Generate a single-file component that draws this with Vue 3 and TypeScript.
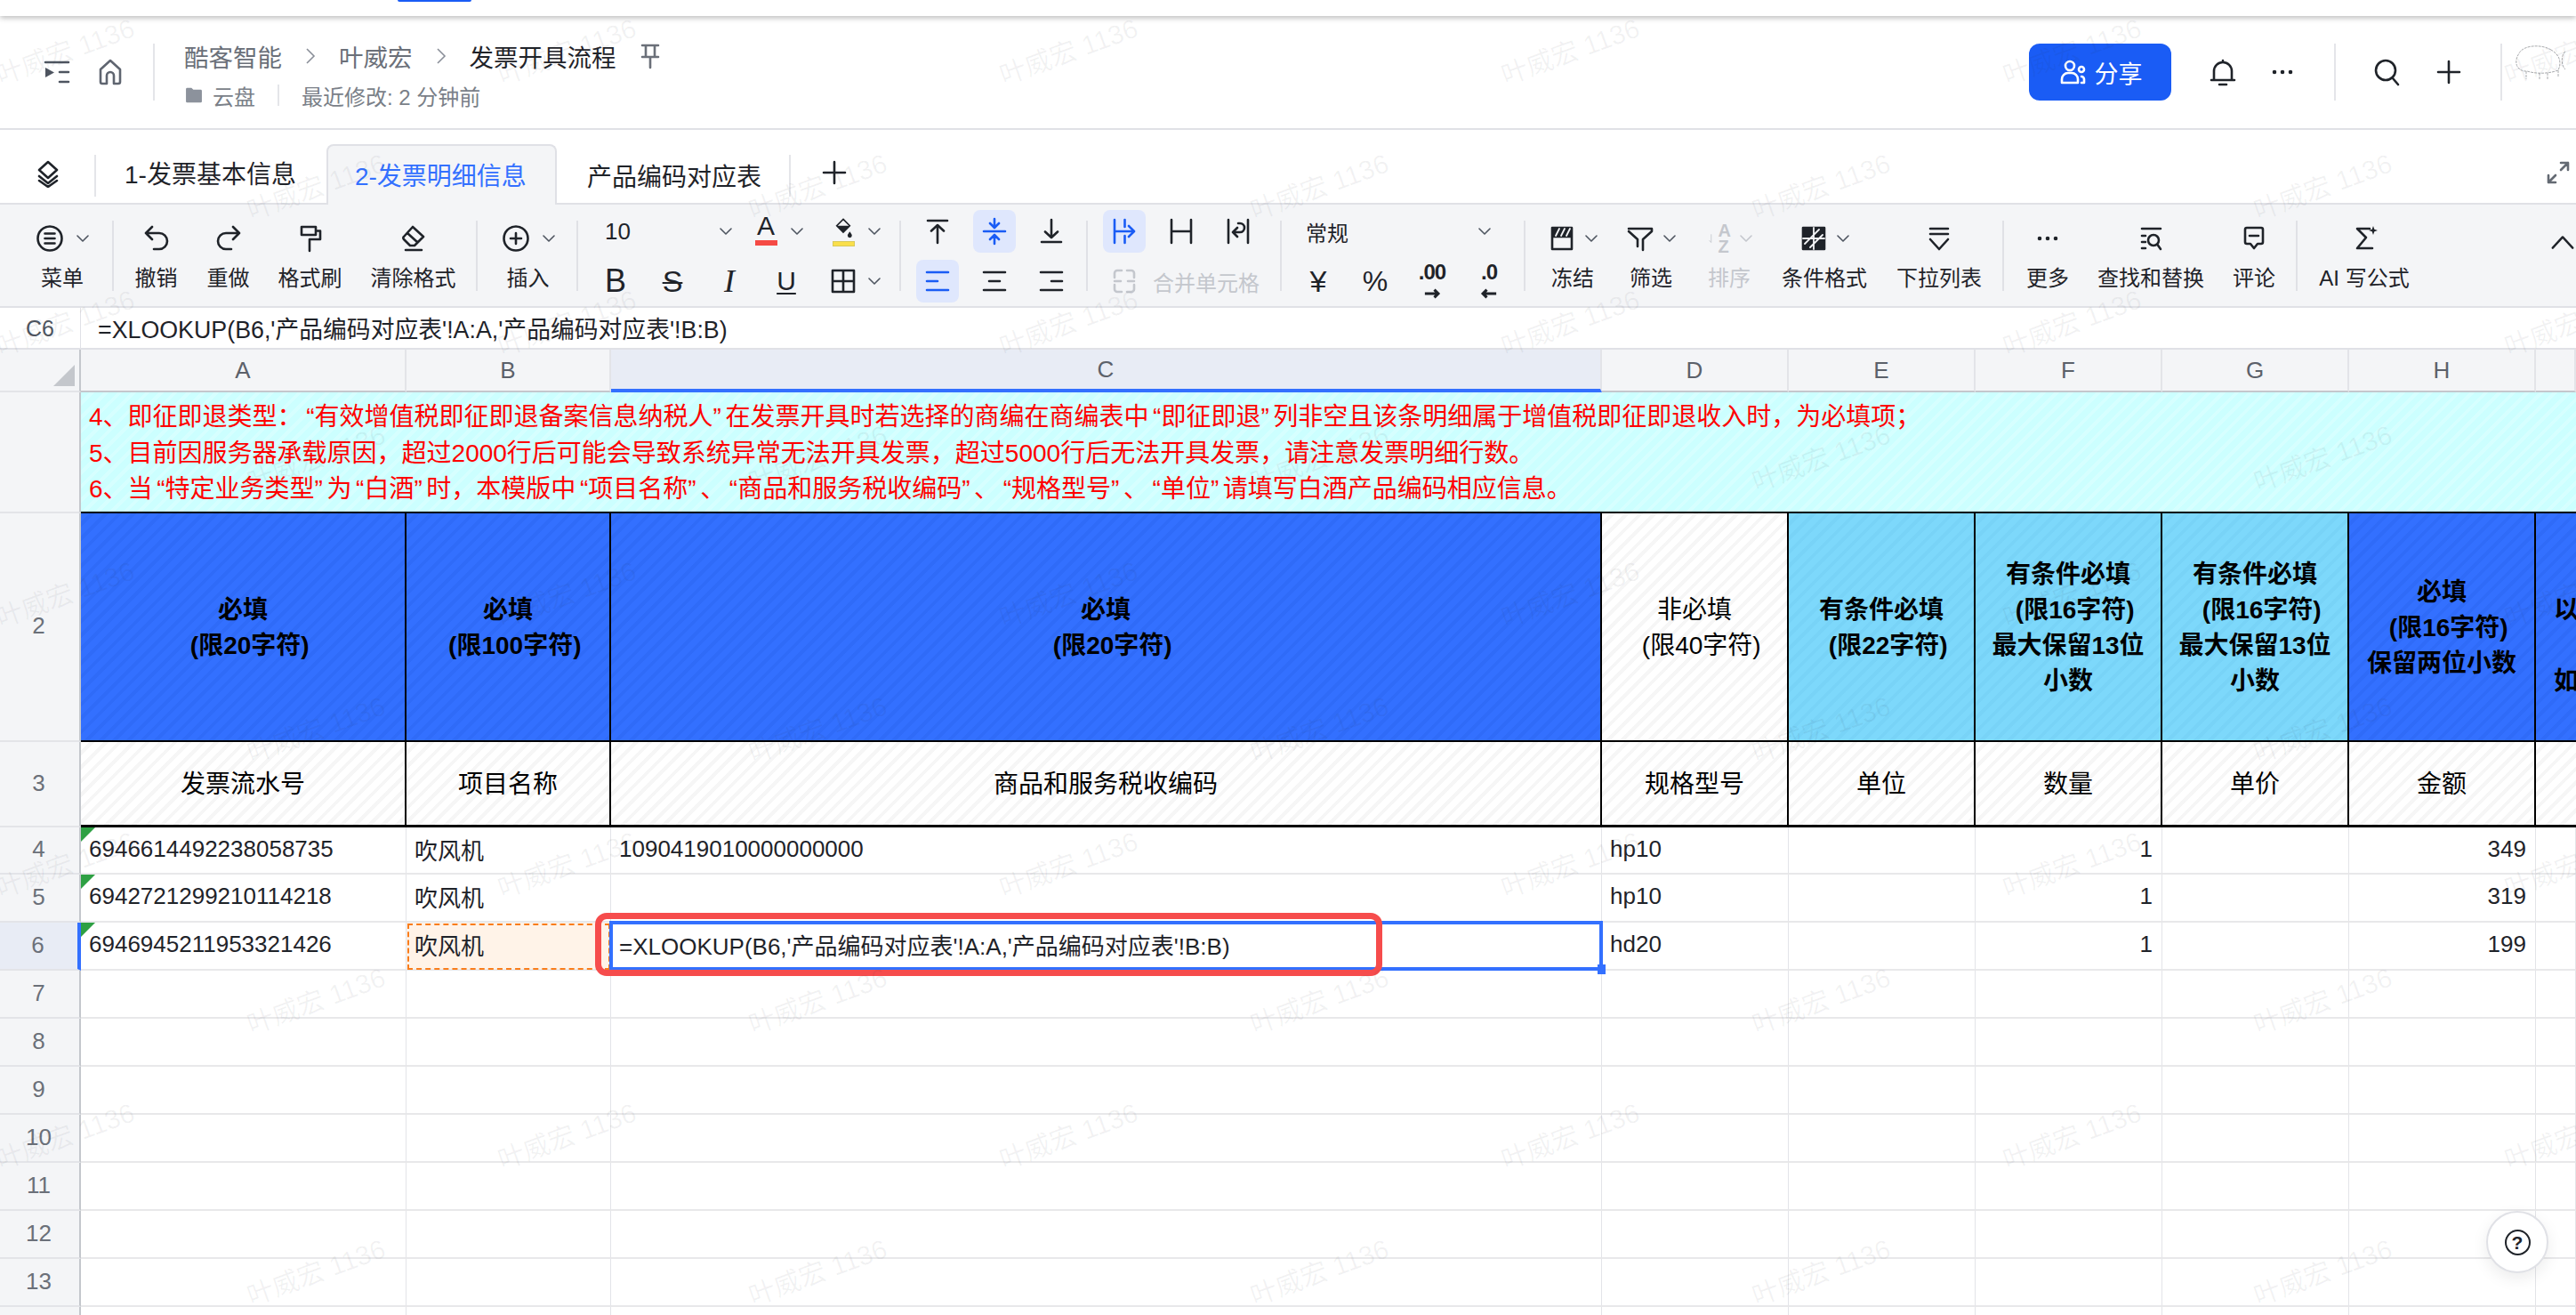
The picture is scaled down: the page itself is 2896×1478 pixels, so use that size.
<script setup lang="ts">
import { computed } from "vue";

interface Tool {
  label: string;
  icon?: string;
  width: number;
  chev?: boolean;
  muted?: boolean;
}

interface HeadCell {
  lines: string[];
  tone: "blue" | "sky" | "plain" | "edge";
}

// 32x32 线条图标
const strokes: Record<string, string> = {
  sidebar: "M3 5H29 M19 16H29 M19 27H29",
  home: "M16 3L27 13V27a2 2 0 0 1-2 2H20V20a4 4 0 0 0-8 0V29H7a2 2 0 0 1-2-2V13Z",
  pin: "M7 4H25 M11 4V16 M21 4V16 M7 17H25 M16 17V29",
  layers: "M16 3L26 12L16 21L6 12Z M6 19L16 27L26 19 M6 24L16 31L26 24",
  plus: "M16 4V28 M4 16H28",
  expand: "M19 5H27V13 M27 5L19 13 M13 27H5V19 M5 27L13 19",
  bell: "M16 3V5 M6 25V15a10 10 0 0 1 20 0V25 M3 25H29 M12 30H20",
  search: "M14 3a11 11 0 1 0 0 22a11 11 0 1 0 0-22z M22 23L28 30",
  people: "M13 4a5 5 0 1 0 0 10a5 5 0 1 0 0-10z M4 28V24a7 7 0 0 1 7-7h4a7 7 0 0 1 7 7v4Z M26 10a3 3 0 1 0 0 6a3 3 0 1 0 0-6z M26 21a3 3 0 0 1 3 3v4H26",
  menu: "M16 2.500a13.500 13.500 0 1 0 0 27a13.500 13.500 0 1 0 0-27z M10.500 10.500H21.500 M10.500 16H21.500 M10.500 21.500H21.500",
  undo: "M11 3L4 10L11 17 M4 10H19a9 9 0 0 1 0 18H13",
  redo: "M21 3L28 10L21 17 M28 10H13a9 9 0 0 0 0 18H19",
  brush: "M6 3H22V12H6Z M22 7.500H27V17H15V30",
  eraser: "M15 3L27 14L17 24H12L5 17a2 2 0 0 1 0-3Z M9 10L20 20 M7 29H25",
  insert: "M16 2.500a13.500 13.500 0 1 0 0 27a13.500 13.500 0 1 0 0-27z M16 10V22 M10 16H22",
  border: "M4 4H28V28H4Z M16 4V28 M4 16H28",
  top: "M5 4H27 M16 29V10 M9 15.500L16 9L23 15.500",
  mid: "M4 16H28 M16 2V11 M11 7L16 12L21 7 M16 30V21 M11 25L16 20L21 25",
  bottom: "M5 28H27 M16 3V22 M9 16.500L16 23L23 16.500",
  left: "M4 6H28 M4 16H16 M4 26H28",
  center: "M4 6H28 M10 16H22 M4 26H28",
  right: "M4 6H28 M16 16H28 M4 26H28",
  overflow: "M5 3V29 M16.500 3V11 M16.500 21V29 M5 16H24 M21 10L27 16L21 22",
  clip: "M5 3V29 M27 3V29 M5 16H27",
  wrap: "M5 3V29 M27 3V29 M16 7H18a5 5 0 0 1 0 10H10 M15 12L10 17L15 22",
  merge: "M13 4H8a3 3 0 0 0-3 3v5 M19 4H24a3 3 0 0 1 3 3v5 M13 28H8a3 3 0 0 1-3-3v-5 M19 28H24a3 3 0 0 0 3-3v-5 M5 16H12 M27 16H20",
  freeze: "M5 4H27V28H5Z M5 14H27",
  filter: "M3 5H29V8L19 17V29 M3 8L13 17V25",
  cond: "M4 4H28V28H4Z",
  dropdown: "M6 5H26 M6 11H26 M6 17L16 28L26 17",
  dots: "M7 16h.01 M16 16h.01 M25 16h.01",
  find: "M6 5H27 M6 13H10 M6 20H10 M6 27H10 M19 12a6 6 0 1 0 0 12a6 6 0 1 0 0-12z M23.500 23L27 28",
  comment: "M8 4H24a2 2 0 0 1 2 2V20a2 2 0 0 1-2 2H20L16 27L12 22H8a2 2 0 0 1-2-2V6a2 2 0 0 1 2-2Z M11 13H21",
  sigma: "M22 5H8L18 15L8 27H25",
  caretUp: "M4 22L16 9L28 22",
  bucket: "M16 3L25 12L16 21L7 12Z",
  arrowRight: "M3 16H27 M20 9L27 16L20 23",
  arrowLeft: "M29 16H5 M12 9L5 16L12 23",
  sortArrow: "M16 3V28 M10 22L16 29",
};

const solids: Record<string, string> = {
  sidebar: "M3 11L13 16.500L3 22Z",
  folder: "M3 6a2 2 0 0 1 2-2h7l3 3h12a2 2 0 0 1 2 2v17a2 2 0 0 1-2 2H5a2 2 0 0 1-2-2z",
  freeze: "M5 4H27V14H5Z",
  cond: "M4 4H28V28H4Z",
  bucket: "M7 12H25L16 21Z M25 20c2 3 3 4 3 5.500a3 3 0 0 1-6 0c0-1.500 1-2.500 3-5.500Z",
  sigma: "M26 2l1.300 3.700L31 7l-3.700 1.300L26 12l-1.300-3.700L21 7l3.700-1.300Z",
};

const slits: Record<string, string> = {
  freeze: "M9 13L13 5 M15 13L19 5 M21 13L25 5",
  cond: "M16 4V28 M4 16H28 M6 22L22 6 M12 26L26 12",
};

const editTools: Tool[] = [
  { label: "撤销", icon: "undo", width: 81 },
  { label: "重做", icon: "redo", width: 81 },
  { label: "格式刷", icon: "brush", width: 103 },
  { label: "清除格式", icon: "eraser", width: 129 },
];

const dataTools: Tool[] = [
  { label: "冻结", icon: "freeze", width: 88, chev: true },
  { label: "筛选", icon: "filter", width: 88, chev: true },
  { label: "排序", width: 88, chev: true, muted: true },
  { label: "条件格式", icon: "cond", width: 126, chev: true },
  { label: "下拉列表", icon: "dropdown", width: 132 },
];

const moreTools: Tool[] = [
  { label: "更多", icon: "dots", width: 80 },
  { label: "查找和替换", icon: "find", width: 152 },
  { label: "评论", icon: "comment", width: 80 },
];

const columnLetters = ["A", "B", "C", "D", "E", "F", "G", "H", ""];

const noteLines = [
  "4、即征即退类型：“有效增值税即征即退备案信息纳税人”在发票开具时若选择的商编在商编表中“即征即退”列非空且该条明细属于增值税即征即退收入时，为必填项；",
  "5、目前因服务器承载原因，超过2000行后可能会导致系统异常无法开具发票，超过5000行后无法开具发票，请注意发票明细行数。",
  "6、当“特定业务类型”为“白酒”时，本模版中“项目名称”、“商品和服务税收编码”、“规格型号”、“单位”请填写白酒产品编码相应信息。",
];

// 引号在参考图里比 Liberation 的字形更宽，单独包一层补宽度
const noteParts = noteLines.map((line) => line.split(/([“”])/).filter((part) => part !== ""));

const headCells: HeadCell[] = [
  { lines: ["必填", "  (限20字符)"], tone: "blue" },
  { lines: ["必填", "  (限100字符)"], tone: "blue" },
  { lines: ["必填", "  (限20字符)"], tone: "blue" },
  { lines: ["非必填", "  (限40字符)"], tone: "plain" },
  { lines: ["有条件必填", "  (限22字符)"], tone: "sky" },
  { lines: ["有条件必填", "  (限16字符)", "最大保留13位", "小数"], tone: "sky" },
  { lines: ["有条件必填", "  (限16字符)", "最大保留13位", "小数"], tone: "sky" },
  { lines: ["必填", "  (限16字符)", "保留两位小数"], tone: "blue" },
  { lines: ["", "以", "", "如"], tone: "edge" },
];

const titleCells = ["发票流水号", "项目名称", "商品和服务税收编码", "规格型号", "单位", "数量", "单价", "金额", ""];

const dataRows = [
  { no: 4, cells: ["6946614492238058735", "吹风机", "1090419010000000000", "hp10", "", "1", "", "349", ""] },
  { no: 5, cells: ["6942721299210114218", "吹风机", "", "hp10", "", "1", "", "319", ""] },
  { no: 6, cells: ["6946945211953321426", "吹风机", "=XLOOKUP(B6,'产品编码对应表'!A:A,'产品编码对应表'!B:B)", "hd20", "", "1", "", "199", ""] },
  ...[7, 8, 9, 10, 11, 12, 13, 14].map((no) => ({ no, cells: ["", "", "", "", "", "", "", "", ""] })),
];

const rightAligned = [5, 7];

const watermarks = computed(() => {
  const marks: { left: number; top: number }[] = [];
  for (let row = 0; row < 10; row++) {
    const shift = row % 2 === 1 ? 282 : 0;
    for (let col = 0; col < 6; col++) {
      marks.push({ left: shift + col * 564 - 8, top: 38 + Math.round(row * 152.4) });
    }
  }
  return marks;
});
</script>

<template>
  <div class="page">
    <div class="strip"><span class="strip-pill" /></div>

    <header class="header">
      <svg class="ico nav-first" viewBox="0 0 32 32"><path :d="strokes.sidebar" /><path class="solid" :d="solids.sidebar" /></svg>
      <svg class="ico nav-home" viewBox="0 0 32 32"><path :d="strokes.home" /></svg>
      <span class="vline nav-line" />
      <div class="doc">
        <div class="crumbs">
          <span class="crumb">酷客智能</span>
          <svg class="crumb-chev" viewBox="0 0 14 24"><path d="M3 4L11 12L3 20" /></svg>
          <span class="crumb">叶威宏</span>
          <svg class="crumb-chev" viewBox="0 0 14 24"><path d="M3 4L11 12L3 20" /></svg>
          <span class="crumb crumb-now">发票开具流程</span>
          <svg class="ico pin" viewBox="0 0 32 32"><path :d="strokes.pin" /></svg>
        </div>
        <div class="meta">
          <svg class="folder" viewBox="0 0 32 32"><path :d="solids.folder" /></svg>
          <span>云盘</span>
          <span class="meta-line" />
          <span>最近修改: 2 分钟前</span>
        </div>
      </div>

      <div class="actions">
        <button type="button" class="share">
          <svg class="ico share-ico" viewBox="0 0 32 32"><path :d="strokes.people" /></svg>
          分享
        </button>
        <svg class="ico act-bell" viewBox="0 0 32 32"><path :d="strokes.bell" /></svg>
        <svg class="ico act-dots" viewBox="0 0 32 32"><path class="dot" :d="strokes.dots" /></svg>
        <span class="vline act-line" />
        <svg class="ico act-search" viewBox="0 0 32 32"><path :d="strokes.search" /></svg>
        <svg class="ico act-plus" viewBox="0 0 32 32"><path :d="strokes.plus" /></svg>
        <span class="vline act-line" />
        <svg class="avatar" viewBox="0 0 80 70">
          <path d="M52 10C40 3 20 5 16 14C9 24 14 35 25 34C38 38 52 36 60 33C64 24 62 16 52 10Z" />
          <path d="M24 34V43 M39 36V44 M48 36V44 M60 33V41 M68 12C63 15 63 28 68 32" />
        </svg>
      </div>
    </header>

    <nav class="tabs">
      <span class="tab-layers">
        <svg class="ico" viewBox="0 0 32 32"><path :d="strokes.layers" /></svg>
      </span>
      <span class="tab">1-发票基本信息</span>
      <span class="tab tab-active">2-发票明细信息</span>
      <span class="tab tab-last">产品编码对应表</span>
      <svg class="ico tab-plus" viewBox="0 0 32 32"><path :d="strokes.plus" /></svg>
      <svg class="ico tab-expand" viewBox="0 0 32 32"><path :d="strokes.expand" /></svg>
    </nav>

    <section class="toolbar">
      <div class="group" style="width: 128px">
        <div class="tool tool-menu">
          <div class="tool-icon">
            <svg class="ico" viewBox="0 0 32 32"><path :d="strokes.menu" /></svg>
            <svg class="chev" viewBox="0 0 14 10"><path d="M1 2L7 8L13 2" /></svg>
          </div>
          <span class="tool-label">菜单</span>
        </div>
      </div>

      <div class="group group-edit">
        <div v-for="tool in editTools" :key="tool.label" class="tool" :style="{ width: `${tool.width}px` }">
          <div class="tool-icon">
            <svg class="ico" viewBox="0 0 32 32"><path :d="strokes[tool.icon!]" /></svg>
          </div>
          <span class="tool-label">{{ tool.label }}</span>
        </div>
      </div>

      <div class="group" style="width: 113px">
        <div class="tool" style="width: 113px">
          <div class="tool-icon">
            <svg class="ico" viewBox="0 0 32 32"><path :d="strokes.insert" /></svg>
            <svg class="chev" viewBox="0 0 14 10"><path d="M1 2L7 8L13 2" /></svg>
          </div>
          <span class="tool-label">插入</span>
        </div>
      </div>

      <div class="group group-stack" style="width: 363px">
        <div class="stack-row font-top">
          <span class="font-size">10<svg class="chev" viewBox="0 0 14 10"><path d="M1 2L7 8L13 2" /></svg></span>
          <span class="swatch swatch-a"><span class="glyph glyph-a">A</span><i class="bar bar-red" /></span>
          <svg class="chev" viewBox="0 0 14 10"><path d="M1 2L7 8L13 2" /></svg>
          <span class="swatch swatch-fill">
            <svg class="bucket" viewBox="0 0 32 32"><path :d="strokes.bucket" /><path class="solid" :d="solids.bucket" /></svg>
            <i class="bar bar-yellow" />
          </span>
          <svg class="chev" viewBox="0 0 14 10"><path d="M1 2L7 8L13 2" /></svg>
        </div>
        <div class="stack-row font-bottom">
          <span class="fmt glyph-b">B</span>
          <span class="fmt glyph-s">S</span>
          <span class="fmt glyph-i">I</span>
          <span class="fmt glyph-u">U</span>
          <span class="fmt fmt-border"><svg class="ico" viewBox="0 0 32 32"><path :d="strokes.border" /></svg></span>
          <svg class="chev" viewBox="0 0 14 10"><path d="M1 2L7 8L13 2" /></svg>
        </div>
      </div>

      <div class="group group-stack group-cells" style="width: 210px">
        <div class="stack-row">
          <span class="cellbtn"><svg class="ico" viewBox="0 0 32 32"><path :d="strokes.top" /></svg></span>
          <span class="cellbtn cellbtn-on"><svg class="ico" viewBox="0 0 32 32"><path :d="strokes.mid" /></svg></span>
          <span class="cellbtn"><svg class="ico" viewBox="0 0 32 32"><path :d="strokes.bottom" /></svg></span>
        </div>
        <div class="stack-row">
          <span class="cellbtn cellbtn-on"><svg class="ico" viewBox="0 0 32 32"><path :d="strokes.left" /></svg></span>
          <span class="cellbtn"><svg class="ico" viewBox="0 0 32 32"><path :d="strokes.center" /></svg></span>
          <span class="cellbtn"><svg class="ico" viewBox="0 0 32 32"><path :d="strokes.right" /></svg></span>
        </div>
      </div>

      <div class="group group-stack group-cells" style="width: 218px">
        <div class="stack-row">
          <span class="cellbtn cellbtn-on"><svg class="ico" viewBox="0 0 32 32"><path :d="strokes.overflow" /></svg></span>
          <span class="cellbtn"><svg class="ico" viewBox="0 0 32 32"><path :d="strokes.clip" /></svg></span>
          <span class="cellbtn"><svg class="ico" viewBox="0 0 32 32"><path :d="strokes.wrap" /></svg></span>
        </div>
        <div class="stack-row is-muted">
          <span class="cellbtn"><svg class="ico" viewBox="0 0 32 32"><path :d="strokes.merge" /></svg></span>
          <span class="merge-label">合并单元格</span>
        </div>
      </div>

      <div class="group group-stack group-cells" style="width: 274px">
        <div class="stack-row number-top">
          <span class="number-name">常规</span>
          <svg class="chev" viewBox="0 0 14 10"><path d="M1 2L7 8L13 2" /></svg>
        </div>
        <div class="stack-row">
          <span class="cellbtn num-glyph num-yen">¥</span>
          <span class="cellbtn num-glyph num-pct">%</span>
          <span class="cellbtn dec">
            <span class="dec-text">.00</span>
            <svg class="dec-arrow" viewBox="0 0 32 32"><path :d="strokes.arrowRight" /></svg>
          </span>
          <span class="cellbtn dec">
            <span class="dec-text">.0</span>
            <svg class="dec-arrow" viewBox="0 0 32 32"><path :d="strokes.arrowLeft" /></svg>
          </span>
        </div>
      </div>

      <div class="group group-tools" style="width: 538px">
        <div
          v-for="tool in dataTools"
          :key="tool.label"
          class="tool"
          :class="{ 'is-muted': tool.muted }"
          :style="{ width: `${tool.width}px` }"
        >
          <div class="tool-icon tool-icon-wide">
            <svg v-if="tool.icon" class="ico" viewBox="0 0 32 32">
              <path v-if="solids[tool.icon]" class="solid" :d="solids[tool.icon]" />
              <path :d="strokes[tool.icon]" />
              <path v-if="slits[tool.icon]" class="slit" :d="slits[tool.icon]" />
            </svg>
            <span v-else class="sort">
              <svg class="sort-arrow" viewBox="0 0 32 32"><path :d="strokes.sortArrow" /></svg>
              <span class="sort-az">A<br />Z</span>
            </span>
            <svg v-if="tool.chev" class="chev" viewBox="0 0 14 10"><path d="M1 2L7 8L13 2" /></svg>
          </div>
          <span class="tool-label">{{ tool.label }}</span>
        </div>
      </div>

      <div class="group group-tools" style="width: 330px">
        <div v-for="tool in moreTools" :key="tool.label" class="tool" :style="{ width: `${tool.width}px` }">
          <div class="tool-icon">
            <svg class="ico" viewBox="0 0 32 32"><path :class="{ dot: tool.icon === 'dots' }" :d="strokes[tool.icon!]" /></svg>
          </div>
          <span class="tool-label">{{ tool.label }}</span>
        </div>
      </div>

      <div class="group group-last">
        <div class="tool" style="width: 150px">
          <div class="tool-icon">
            <svg class="ico" viewBox="0 0 32 32"><path :d="strokes.sigma" /><path class="solid" :d="solids.sigma" /></svg>
          </div>
          <span class="tool-label">AI 写公式</span>
        </div>
      </div>

      <svg class="ico collapse" viewBox="0 0 32 32"><path :d="strokes.caretUp" /></svg>
    </section>

    <section class="formula">
      <span class="formula-ref">C6</span>
      <span class="formula-text">=XLOOKUP(B6,'产品编码对应表'!A:A,'产品编码对应表'!B:B)</span>
    </section>

    <main class="sheet">
      <div class="row row-columns">
        <div class="rowno corner"><i class="corner-mark" /></div>
        <div
          v-for="(letter, index) in columnLetters"
          :key="index"
          class="colhead"
          :class="{ 'colhead-on': letter === 'C' }"
        >
          {{ letter }}
        </div>
      </div>

      <div class="row row-note">
        <div class="rowno" />
        <div class="note">
          <p v-for="(parts, lineIndex) in noteParts" :key="lineIndex">
            <span
              v-for="(part, partIndex) in parts"
              :key="partIndex"
              :class="{ 'quote-open': part === '“', 'quote-close': part === '”' }"
            >{{ part }}</span>
          </p>
        </div>
      </div>

      <div class="row row-head">
        <div class="rowno">2</div>
        <div
          v-for="(cell, index) in headCells"
          :key="index"
          class="head"
          :class="`head-${cell.tone}`"
        >
          <div v-for="(line, lineIndex) in cell.lines" :key="lineIndex" class="head-line">{{ line }}</div>
        </div>
      </div>

      <div class="row row-title">
        <div class="rowno">3</div>
        <div v-for="(title, index) in titleCells" :key="index" class="title">{{ title }}</div>
      </div>

      <div
        v-for="row in dataRows"
        :key="row.no"
        class="row row-data"
        :class="{ 'row-first': row.no === 4 }"
      >
        <div class="rowno" :class="{ 'rowno-on': row.no === 6 }">{{ row.no }}</div>
        <div
          v-for="(value, index) in row.cells"
          :key="index"
          class="cell"
          :class="{
            'cell-right': rightAligned.includes(index),
            'cell-flag': index === 0 && row.no <= 6,
            'cell-copy': index === 1 && row.no === 6,
            'cell-active': index === 2 && row.no === 6,
          }"
        >
          {{ value }}
        </div>
      </div>
    </main>

    <div class="callout" />

    <button type="button" class="help"><span class="help-ring">?</span></button>

    <div class="watermarks" aria-hidden="true">
      <span
        v-for="(mark, index) in watermarks"
        :key="index"
        class="watermark"
        :style="{ left: `${mark.left}px`, top: `${mark.top}px` }"
      >叶威宏 1136</span>
    </div>
  </div>
</template>

<style>
body {
  margin: 0;
  background: #fff;
  font-family: "Liberation Sans", "Noto Sans CJK SC", sans-serif;
}
</style>

<style scoped>
.page {
  position: relative;
  width: 2896px;
  height: 1478px;
  overflow: hidden;
  color: #1f2329;
  background: #fff;
  font-family: "Liberation Sans", "Noto Sans CJK SC", sans-serif;
}

.ico {
  width: 32px;
  height: 32px;
  flex: none;
  fill: none;
  stroke: currentColor;
  stroke-width: 2.6;
  stroke-linecap: round;
  stroke-linejoin: round;
}

.ico .solid,
.bucket .solid {
  fill: currentColor;
  stroke: none;
}

.ico .slit {
  stroke: #f4f5f7;
  stroke-width: 1.8;
}

.ico .dot {
  stroke-width: 4.600;
}

.chev {
  width: 14px;
  height: 10px;
  flex: none;
  fill: none;
  stroke: #4e5560;
  stroke-width: 1.6;
  stroke-linecap: round;
  stroke-linejoin: round;
}

.strip {
  position: relative;
  height: 18px;
  background: #fff;
  box-shadow: 0 2px 6px rgba(0, 0, 0, 0.28);
}

.strip-pill {
  position: absolute;
  left: 447px;
  top: 0;
  width: 83px;
  height: 2px;
  border-radius: 0 0 8px 8px;
  background: #1a5cf5;
}

.header {
  display: flex;
  align-items: center;
  height: 128px;
  box-sizing: border-box;
  border-bottom: 2px solid #e0e1e6;
  padding-left: 48px;
}

.nav-first {
  color: #4e5560;
}

.nav-home {
  margin-left: 28px;
  color: #5f6570;
}

.vline {
  flex: none;
  width: 2px;
  height: 64px;
  background: #e4e5e9;
}

.nav-line {
  margin-left: 32px;
}

.doc {
  margin-left: 33px;
  padding-top: 5px;
}

.crumbs {
  display: flex;
  align-items: center;
  gap: 25px;
  height: 40px;
  font-size: 27.5px;
  color: #6b7079;
}

.crumb-now {
  color: #1f2329;
}

.crumb-chev {
  width: 14px;
  height: 24px;
  fill: none;
  stroke: #8a8f99;
  stroke-width: 1.6;
}

.pin {
  color: #6b7079;
  margin-left: -3px;
}

.meta {
  display: flex;
  align-items: center;
  margin-top: 7px;
  height: 34px;
  font-size: 24px;
  color: #7a7f88;
}

.folder {
  width: 22px;
  height: 22px;
  margin-right: 10px;
  fill: #8c929c;
}

.meta-line {
  width: 2px;
  height: 24px;
  margin: 0 25px;
  background: #e4e5e9;
}

.actions {
  display: flex;
  align-items: center;
  margin-left: auto;
}

.share {
  display: flex;
  align-items: center;
  justify-content: center;
  gap: 9px;
  width: 160px;
  height: 64px;
  border: 0;
  border-radius: 12px;
  background: #1a5cf5;
  color: #fff;
  font: inherit;
  font-size: 27px;
}

.act-bell {
  margin-left: 42px;
}

.act-dots {
  margin-left: 35px;
}

.act-line {
  margin-left: 42px;
}

.act-search {
  margin-left: 42px;
}

.act-plus {
  margin-left: 37px;
}

.avatar {
  width: 80px;
  height: 70px;
  margin-left: 3px;
  fill: none;
  stroke: #a9abae;
  stroke-width: 1;
  stroke-dasharray: 3 1;
}

.tabs {
  display: flex;
  align-items: flex-end;
  height: 84px;
  box-sizing: border-box;
  border-bottom: 2px solid #e0e1e6;
}

.tab-layers {
  display: flex;
  align-items: center;
  width: 108px;
  height: 47px;
  margin-bottom: 7px;
  box-sizing: border-box;
  padding-left: 38px;
  border-right: 2px solid #e4e5e9;
}

.tab-layers .ico {
  margin-top: -5px;
}

.tab {
  display: flex;
  align-items: center;
  height: 66px;
  padding: 0 34px 2px 32px;
  box-sizing: content-box;
  font-size: 28px;
  margin-bottom: 0;
  height: 64px;
}

.tab-active {
  position: relative;
  height: 68px;
  margin-bottom: -2px;
  padding: 0 30px 2px;
  box-sizing: border-box;
  width: 259px;
  border: 2px solid #e0e1e6;
  border-bottom: 0;
  border-radius: 8px 8px 0 0;
  background: #f4f5f7;
  color: #3370ff;
}

.tab-last {
  padding: 0 31px 2px 34px;
  height: 45px;
  margin-bottom: 7px;
  border-right: 2px solid #e4e5e9;
}

.tab-plus {
  margin: 0 0 18px 33px;
}

.tab-expand {
  margin: 0 4px 18px auto;
  color: #646a73;
}

.toolbar {
  display: flex;
  align-items: flex-start;
  height: 116px;
  box-sizing: border-box;
  padding-top: 6px;
  border-bottom: 2px solid #e0e1e6;
  background: #f4f5f7;
}

.group {
  position: relative;
  display: flex;
  flex: none;
  height: 104px;
}

.group::after {
  content: "";
  position: absolute;
  right: 0;
  top: 12px;
  bottom: 13px;
  width: 2px;
  background: #e0e1e6;
}

.group-edit {
  width: 409px;
  padding-left: 7px;
  box-sizing: border-box;
}

.group-tools {
  padding-left: 9px;
  box-sizing: border-box;
}

.group-last::after {
  display: none;
}

.tool {
  display: flex;
  flex: none;
  flex-direction: column;
  align-items: center;
}

.tool-menu {
  width: 100%;
  padding-left: 12px;
  box-sizing: border-box;
}

.tool-icon {
  display: flex;
  align-items: center;
  justify-content: center;
  gap: 14px;
  height: 36px;
  margin-top: 14px;
}

.tool-icon-wide {
  gap: 10px;
}

.tool-label {
  margin-top: 10px;
  line-height: 34px;
  font-size: 24px;
  white-space: nowrap;
}

.group-stack {
  flex-direction: column;
  gap: 8px;
}

.group-cells {
  padding-left: 9px;
  box-sizing: border-box;
}

.stack-row {
  display: flex;
  align-items: center;
  height: 48px;
}

.font-top {
  padding-left: 30px;
}

.font-size {
  display: flex;
  align-items: center;
  justify-content: space-between;
  box-sizing: border-box;
  width: 143px;
  padding-right: 0;
  font-size: 26px;
}

.swatch {
  position: relative;
  display: flex;
  flex-direction: column;
  align-items: center;
  flex: none;
  width: 40px;
  height: 48px;
}

.swatch-a {
  margin: 0 8px 0 18px;
}

.swatch-fill {
  margin: 0 8px 0 25px;
}

.glyph-a {
  font-size: 30px;
  line-height: 32px;
  margin-top: 2px;
}

.bucket {
  width: 26px;
  height: 26px;
  margin-top: 8px;
  fill: none;
  stroke: currentColor;
  stroke-width: 2;
}

.bar {
  width: 25px;
  height: 6px;
}

.bar-red {
  background: #f54a45;
}

.bar-yellow {
  margin-top: 1px;
  background: #fadf4b;
  border: 1px solid #d9c95a;
  box-sizing: border-box;
}

.font-bottom {
  padding-left: 22px;
  gap: 24px;
}

.fmt {
  display: flex;
  align-items: center;
  justify-content: center;
  flex: none;
  width: 40px;
  height: 40px;
  font-size: 36px;
  line-height: 40px;
}

.glyph-s {
  font-size: 34px;
  text-decoration: line-through;
  text-decoration-thickness: 2px;
}

.glyph-i {
  font-style: italic;
  font-family: "Liberation Serif", serif;
}

.glyph-u {
  text-decoration: underline;
  text-decoration-thickness: 2px;
  text-underline-offset: 3px;
  font-size: 30px;
}

.font-bottom .chev {
  margin-left: -16px;
}

.cellbtn {
  display: flex;
  align-items: center;
  justify-content: center;
  flex: none;
  width: 48px;
  height: 48px;
  margin: 0 8px;
  border-radius: 8px;
}

.cellbtn-on {
  background: #dfe7fd;
  color: #1a5cf5;
}

.merge-label {
  margin-left: 0;
  font-size: 24px;
  white-space: nowrap;
}

.is-muted {
  color: #c4c7cd;
}

.is-muted .chev {
  stroke: #c4c7cd;
}

.number-top {
  justify-content: flex-start;
  padding-left: 18px;
}

.number-name {
  width: 194px;
  font-size: 24px;
}

.num-glyph {
  font-size: 34px;
}

.num-pct {
  font-size: 32px;
}

.dec {
  position: relative;
  flex-direction: column;
  justify-content: flex-start;
}

.dec-text {
  font-size: 24px;
  font-weight: 700;
  line-height: 28px;
  letter-spacing: -1px;
}

.dec-arrow {
  width: 24px;
  height: 20px;
  fill: none;
  stroke: currentColor;
  stroke-width: 5;
}

.sort {
  display: flex;
  align-items: center;
  width: 28px;
  height: 36px;
}

.sort-arrow {
  width: 12px;
  height: 36px;
  margin-right: 2px;
  fill: none;
  stroke: currentColor;
  stroke-width: 2.4;
}

.sort-az {
  font-size: 20px;
  line-height: 18px;
  font-weight: 700;
}

.collapse {
  margin: 22px 0 0 auto;
  width: 30px;
  height: 30px;
}

.formula {
  display: flex;
  align-items: center;
  height: 47px;
  box-sizing: border-box;
  border-bottom: 2px solid #e0e1e6;
  font-size: 26.8px;
}

.formula-ref {
  width: 91px;
  height: 100%;
  line-height: 46px;
  box-sizing: border-box;
  padding-left: 29px;
  border-right: 1px solid #e0e1e6;
  font-size: 25px;
  color: #4e5560;
}

.formula-text {
  margin-left: 19px;
}

.row {
  display: grid;
  grid-template-columns: 91px 366px 230px 1114px 210px 210px 210px 210px 210px 45px;
}

.rowno {
  display: flex;
  align-items: center;
  justify-content: center;
  box-sizing: border-box;
  padding-right: 2px;
  padding-bottom: 2px;
  border-right: 2px solid #c4c7cc;
  border-bottom: 2px solid #e3e4e8;
  background: #f4f5f7;
  font-size: 26px;
  color: #6b7079;
}

.rowno-on {
  border-right: 4px solid #3370ff;
  background: #e8ecf5;
}

.row-columns {
  height: 48px;
}

.corner {
  position: relative;
}

.corner-mark {
  position: absolute;
  left: 60px;
  top: 17px;
  width: 24px;
  height: 24px;
  background: #c4c7cc;
  clip-path: polygon(100% 0, 100% 100%, 0 100%);
}

.colhead {
  display: flex;
  align-items: center;
  justify-content: center;
  box-sizing: border-box;
  border-right: 2px solid #e3e4e8;
  border-bottom: 2px solid #c4c7cc;
  background: #f4f5f7;
  font-size: 26px;
  color: #5c616a;
}

.colhead-on {
  border-bottom: 4px solid #3370ff;
  background: #e8ecf5;
}

.row-note {
  height: 136px;
}

.note {
  grid-column: 2 / -1;
  box-sizing: border-box;
  padding: 8px 0 0 9px;
  border-bottom: 2px solid #000;
  background: repeating-linear-gradient(135deg, #ccffff 0 7px, #d6ffff 7px 11px);
  color: #f00;
  font-size: 28px;
  line-height: 40.500px;
}

.note p {
  margin: 0;
  white-space: nowrap;
}

.quote-open {
  padding-left: 4.600px;
}

.quote-close {
  padding-right: 4.600px;
}

.row-head {
  height: 257px;
}

.head {
  display: flex;
  flex-direction: column;
  justify-content: center;
  align-items: center;
  box-sizing: border-box;
  padding-top: 3px;
  border-right: 2px solid #000;
  border-bottom: 2px solid #000;
  font-size: 28px;
  font-weight: 700;
  color: #000;
}

.head-line {
  min-height: 40px;
  line-height: 40px;
  white-space: pre;
}

.head-blue,
.head-edge {
  background: repeating-linear-gradient(135deg, #3370ff 0 7px, #2f6bf8 7px 11px);
}

.head-sky {
  background: repeating-linear-gradient(135deg, #7dd8fb 0 7px, #78d3f7 7px 11px);
}

.head-plain {
  background: repeating-linear-gradient(135deg, #fff 0 7px, #f6f6f6 7px 11px);
  font-weight: 400;
}

.head-edge {
  align-items: flex-start;
  padding-left: 20px;
  border-right: 0;
}

.row-title {
  height: 96px;
}

.title {
  display: flex;
  align-items: center;
  justify-content: center;
  box-sizing: border-box;
  border-right: 2px solid #000;
  border-bottom: 3px solid #000;
  background: repeating-linear-gradient(135deg, #fff 0 7px, #f6f6f6 7px 11px);
  font-size: 28px;
  color: #000;
  padding-bottom: 3px;
}

.title:last-child {
  border-right: 0;
}

.row-data {
  height: 54px;
}

.row-first {
  height: 53px;
}

.cell {
  position: relative;
  display: flex;
  align-items: center;
  box-sizing: border-box;
  padding: 0 9px 3px;
  border-right: 1px solid #e3e4e8;
  border-bottom: 2px solid #e8e8ea;
  font-size: 26px;
  white-space: nowrap;
}

.cell-right {
  justify-content: flex-end;
  padding-right: 10px;
}

.cell-flag::before {
  content: "";
  position: absolute;
  left: 0;
  top: 0;
  width: 16px;
  height: 16px;
  background: #2ea043;
  clip-path: polygon(0 0, 100% 0, 0 100%);
}

.cell-copy {
  background: #fff3e8;
  outline: 2px dashed #f97d1c;
  outline-offset: -3px;
}

.cell-active::after {
  content: "";
  position: absolute;
  inset: -2px;
  border: 4px solid #3370ff;
}

.cell-active::before {
  content: "";
  position: absolute;
  right: -5px;
  bottom: -6px;
  z-index: 1;
  width: 9px;
  height: 11px;
  background: #3370ff;
}

.callout {
  position: absolute;
  left: 669px;
  top: 1026px;
  width: 885px;
  height: 71px;
  box-sizing: border-box;
  border: 7px solid #f64c4c;
  border-radius: 13px;
}

.help {
  position: absolute;
  left: 2795px;
  top: 1361px;
  display: flex;
  align-items: center;
  justify-content: center;
  width: 70px;
  height: 70px;
  padding: 0;
  border: 2px solid #e0e1e6;
  border-radius: 50%;
  background: #fff;
  box-shadow: 0 6px 18px rgba(0, 0, 0, 0.08);
}

.help-ring {
  display: flex;
  align-items: center;
  justify-content: center;
  box-sizing: border-box;
  width: 29px;
  height: 29px;
  border: 2.500px solid #1f2329;
  border-radius: 50%;
  font-size: 21px;
  font-weight: 700;
  line-height: 1;
  color: #1f2329;
}

.watermarks {
  position: absolute;
  inset: 0;
  pointer-events: none;
  overflow: hidden;
}

.watermark {
  position: absolute;
  width: 166px;
  font-size: 30px;
  line-height: 40px;
  white-space: nowrap;
  color: rgba(40, 45, 60, 0.06);
  transform: rotate(-20deg);
}
</style>
